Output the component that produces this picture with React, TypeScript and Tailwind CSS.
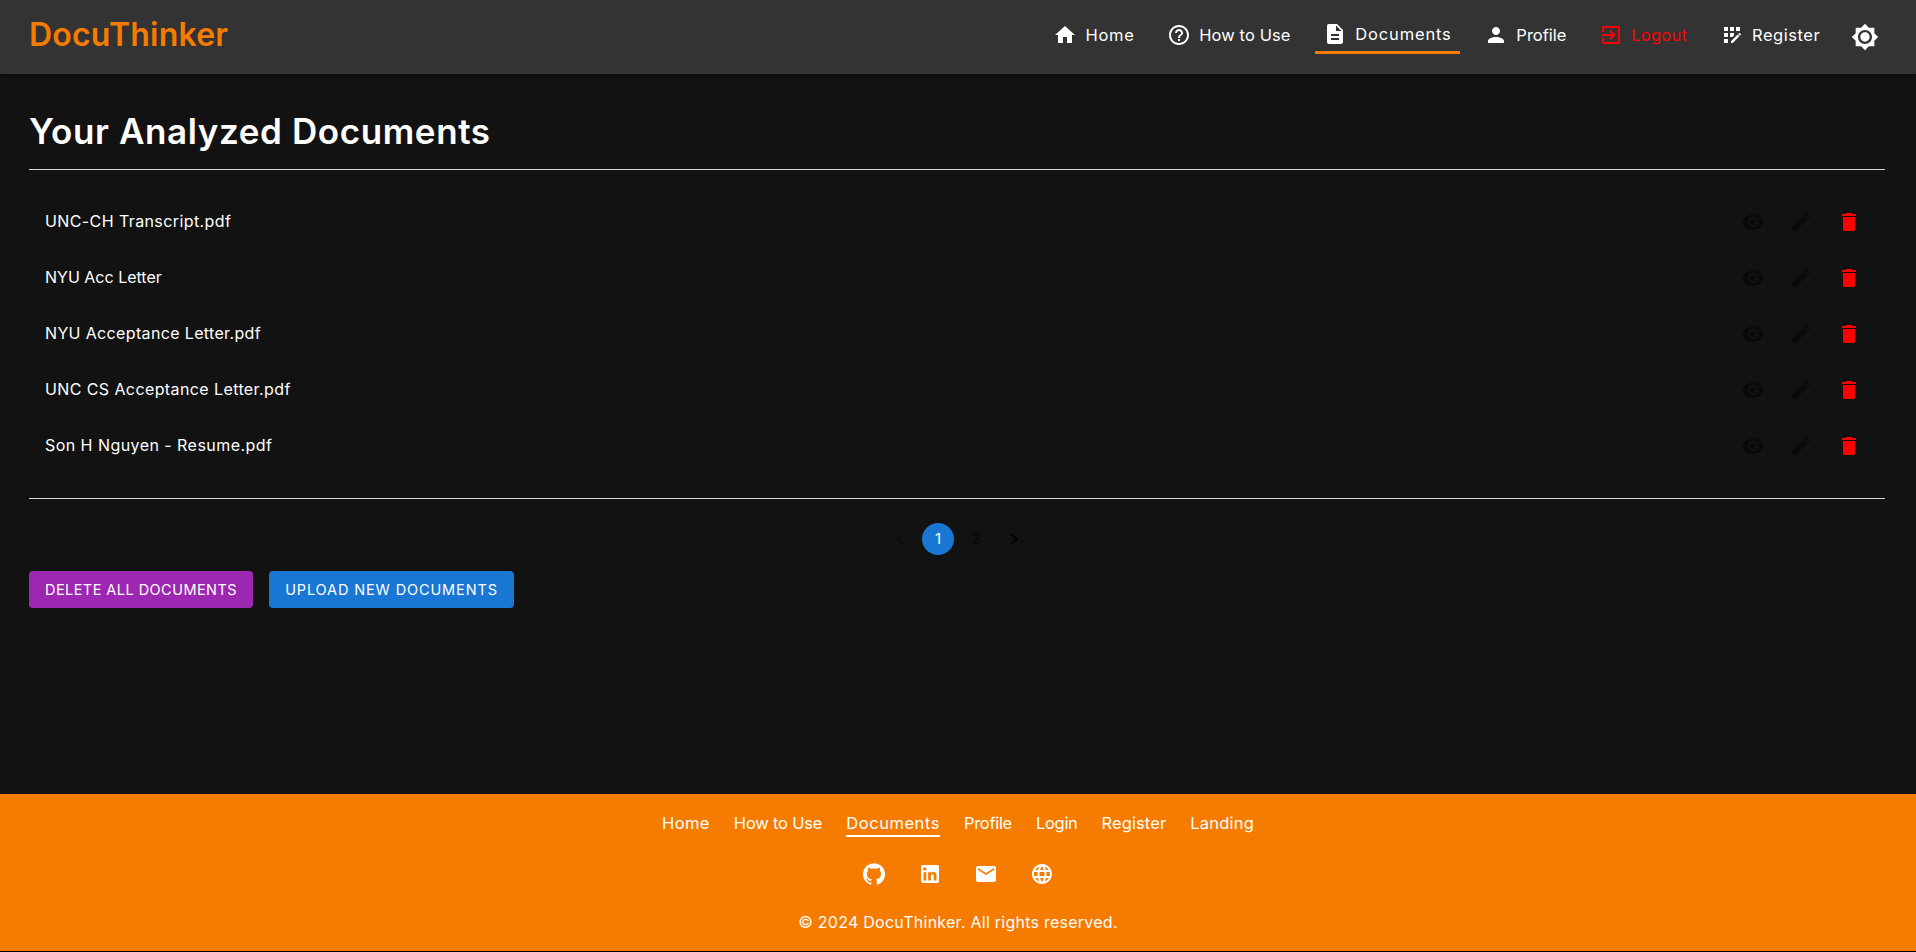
import React from 'react';
import {
  MdHome,
  MdHelpOutline,
  MdDescription,
  MdPerson,
  MdExitToApp,
  MdAppRegistration,
  MdBrightness7,
  MdVisibility,
  MdEdit,
  MdDelete,
  MdChevronLeft,
  MdChevronRight,
  MdEmail,
  MdLanguage,
} from 'react-icons/md';

const GithubIcon = () => (
  <svg viewBox="0 0 24 24" className="w-6 h-6" fill="currentColor">
    <path d="M12 1.27a11 11 0 00-3.48 21.46c.55.09.73-.28.73-.55v-1.84c-3.03.64-3.67-1.46-3.67-1.46-.55-1.29-1.28-1.65-1.28-1.65-.92-.65.1-.65.1-.65 1.1 0 1.73 1.1 1.73 1.1.92 1.65 2.57 1.2 3.21.92a2 2 0 01.64-1.47c-2.47-.27-5.04-1.19-5.04-5.5 0-1.1.46-2.1 1.2-2.84a3.76 3.76 0 010-2.93s.91-.27 3.11 1.1c1.8-.49 3.7-.49 5.5 0 2.1-1.37 3.02-1.1 3.02-1.1a3.76 3.76 0 010 2.93c.83.74 1.2 1.74 1.2 2.94 0 4.21-2.57 5.13-5.04 5.4.45.37.82.92.82 2.02v3.03c0 .27.1.64.73.55A11 11 0 0012 1.27" />
  </svg>
);

const LinkedinIcon = () => (
  <svg viewBox="0 0 24 24" className="w-6 h-6" fill="currentColor">
    <path d="M19 3a2 2 0 0 1 2 2v14a2 2 0 0 1-2 2H5a2 2 0 0 1-2-2V5a2 2 0 0 1 2-2h14m-.5 15.5v-5.3a3.26 3.26 0 0 0-3.26-3.26c-.85 0-1.84.52-2.32 1.3v-1.11h-2.79v8.37h2.79v-4.93c0-.77.62-1.4 1.39-1.4a1.4 1.4 0 0 1 1.4 1.4v4.93h2.79M6.88 8.56a1.68 1.68 0 0 0 1.68-1.68c0-.93-.75-1.69-1.68-1.69a1.69 1.69 0 0 0-1.69 1.69c0 .93.76 1.68 1.69 1.68m1.39 9.94v-8.37H5.5v8.37h2.77z" />
  </svg>
);

const navItems = [
  { label: 'Home', icon: MdHome, tracking: 'tracking-[0.7px]' },
  { label: 'How to Use', icon: MdHelpOutline, tracking: 'tracking-[0.1px]' },
  { label: 'Documents', icon: MdDescription, tracking: 'tracking-[0.85px]', active: true },
  { label: 'Profile', icon: MdPerson, tracking: 'tracking-[0px]' },
  { label: 'Logout', icon: MdExitToApp, tracking: 'tracking-[0.3px]', danger: true },
  { label: 'Register', icon: MdAppRegistration, tracking: 'tracking-[0.55px]' },
];

const documents = [
  { name: 'UNC-CH Transcript.pdf', tracking: 'tracking-[0.4px]' },
  { name: 'NYU Acc Letter', tracking: 'tracking-[0px]' },
  { name: 'NYU Acceptance Letter.pdf', tracking: 'tracking-[0.35px]' },
  { name: 'UNC CS Acceptance Letter.pdf', tracking: 'tracking-[0.4px]' },
  { name: 'Son H Nguyen - Resume.pdf', tracking: 'tracking-[0.45px]' },
];

const footerLinks = [
  { label: 'Home', tracking: 'tracking-[0.4px]' },
  { label: 'How to Use', tracking: 'tracking-[-0.2px]' },
  { label: 'Documents', tracking: 'tracking-[0.55px]', active: true },
  { label: 'Profile', tracking: 'tracking-[-0.3px]' },
  { label: 'Login', tracking: 'tracking-[-0.3px]' },
  { label: 'Register', tracking: 'tracking-[0.1px]' },
  { label: 'Landing', tracking: 'tracking-[0.2px]' },
];

export default function App() {
  return (
    <div className="min-h-[952px] flex flex-col bg-[#121212] font-['Inter',sans-serif] text-white">
      {/* Navbar */}
      <header className="h-[74px] shrink-0 flex items-center justify-between pl-[29px] pr-[31px] bg-[#333333] shadow-[0_2px_4px_rgba(0,0,0,0.3)]">
        <div className="mb-1 text-[32px] leading-10 font-semibold tracking-[0.2px] text-[#f57c00]">DocuThinker</div>
        <nav className="flex items-center gap-[16.7px]">
          {navItems.map((item) => (
            <a
              key={item.label}
              className={`h-9 mt-[-2px] flex items-center gap-2 px-2 text-[16.5px] ${item.tracking} ${
                item.active ? 'border-b-[3px] border-[#f57c00] pb-[1px]' : 'pb-[2px]'
              } ${item.danger ? 'text-[#ff0000]' : 'text-white'}`}
            >
              <item.icon className="w-6 h-6" />
              <span>{item.label}</span>
            </a>
          ))}
          <button className="w-10 h-10 flex items-center justify-center text-white">
            <MdBrightness7 className="w-7 h-7" />
          </button>
        </nav>
      </header>

      {/* Documents */}
      <main className="flex-1 pl-[29px] pr-[31px] pt-[33px]">
        <h1 className="text-[35px] leading-[48px] font-semibold tracking-[0.6px] pb-[14px] border-b border-[#d4d4d4]">
          Your Analyzed Documents
        </h1>

        <ul className="py-6 border-b border-[#d4d4d4]">
          {documents.map((doc) => (
            <li key={doc.name} className="h-14 flex items-center justify-between pl-4 pr-[24px]">
              <span className={`pb-[2px] text-[16px] ${doc.tracking}`}>{doc.name}</span>
              <span className="flex items-center gap-6">
                <MdVisibility className="w-6 h-6 text-[#0a0a0a]" />
                <MdEdit className="w-6 h-6 text-[#0a0a0a]" />
                <MdDelete className="w-6 h-6 text-[#ff0000]" />
              </span>
            </li>
          ))}
        </ul>

        <div className="mt-6 flex items-center justify-center gap-[6px] text-[15px] text-[#050505]">
          <span className="w-8 h-8 flex items-center justify-center">
            <MdChevronLeft className="w-5 h-5 text-[#0a0a0a]" />
          </span>
          <span className="w-8 h-8 flex items-center justify-center rounded-full bg-[#1976d2] text-white">1</span>
          <span className="w-8 h-8 flex items-center justify-center">2</span>
          <span className="w-8 h-8 flex items-center justify-center">
            <MdChevronRight className="w-6 h-6 text-black" />
          </span>
        </div>

        <div className="mt-4 flex gap-4">
          <button className="h-[37px] w-[224px] rounded bg-[#9c27b0] text-white text-[14.5px] tracking-[0.45px]">
            DELETE ALL DOCUMENTS
          </button>
          <button className="h-[37px] w-[245px] rounded bg-[#1976d2] text-white text-[14.5px] tracking-[0.87px]">
            UPLOAD NEW DOCUMENTS
          </button>
        </div>
      </main>

      {/* Footer */}
      <footer className="h-[158px] shrink-0 flex flex-col items-center bg-[#f57c00] border-b border-black pt-[17px]">
        <div className="flex items-start gap-6 text-[16.5px] leading-[24px]">
          {footerLinks.map((link) => (
            <a
              key={link.label}
              className={`border-b-2 ${link.tracking} ${link.active ? 'border-white' : 'border-transparent'}`}
            >
              {link.label}
            </a>
          ))}
        </div>
        <div className="mt-[25px] flex items-center gap-8">
          <GithubIcon />
          <LinkedinIcon />
          <MdEmail className="w-6 h-6" />
          <MdLanguage className="w-6 h-6" />
        </div>
        <p className="mt-[24px] text-[16px] leading-6 tracking-[0.25px]">© 2024 DocuThinker. All rights reserved.</p>
      </footer>
    </div>
  );
}
